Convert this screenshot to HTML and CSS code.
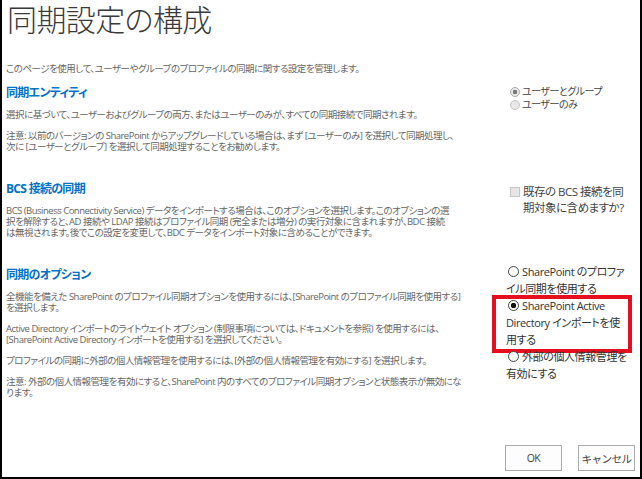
FILE: index.html
```html
<!DOCTYPE html>
<html>

<head>
    <meta charset="utf-8">
    <title>同期設定の構成</title>
    <link rel="stylesheet" href="styles.css">
</head>

<body>
    <div class="frame">
        <h1 class="title">同期設定の構成</h1>
        <p class="intro">このページを使用して、ユーザーやグループのプロファイルの同期に関する設定を管理します。</p>

        <section class="setting">
            <div class="desc">
                <h2>同期エンティティ</h2>
                <p>選択に基づいて、ユーザーおよびグループの両方、またはユーザーのみが、すべての同期接続で同期されます。</p>
                <p>注意: 以前のバージョンの SharePoint からアップグレードしている場合は、まず [ユーザーのみ] を選択して同期処理し、<br>次に [ユーザーとグループ] を選択して同期処理することをお勧めします。</p>
            </div>
            <div class="control control-entity">
                <label class="choice"><input type="radio" name="entity" checked disabled>ユーザーとグループ</label>
                <label class="choice"><input type="radio" name="entity" disabled>ユーザーのみ</label>
            </div>
        </section>

        <section class="setting">
            <div class="desc">
                <h2>BCS 接続の同期</h2>
                <p>BCS (Business Connectivity Service) データをインポートする場合は、このオプションを選択します。このオプションの選<br>択を解除すると、AD 接続や LDAP 接続はプロファイル同期 (完全または増分) の実行対象に含まれますが、BDC 接続<br>は無視されます。後でこの設定を変更して、BDC データをインポート対象に含めることができます。</p>
            </div>
            <div class="control control-bcs">
                <label class="check"><input type="checkbox" disabled><span>既存の BCS 接続を同<br>期対象に含めますか?</span></label>
            </div>
        </section>

        <section class="setting">
            <div class="desc">
                <h2>同期のオプション</h2>
                <p>全機能を備えた SharePoint のプロファイル同期オプションを使用するには、[SharePoint のプロファイル同期を使用する]<br>を選択します。</p>
                <p>Active Directory インポートのライトウェイト オプション (制限事項については、ドキュメントを参照) を使用するには、<br>[SharePoint Active Directory インポートを使用する] を選択してください。</p>
                <p>プロファイルの同期に外部の個人情報管理を使用するには、[外部の個人情報管理を有効にする] を選択します。</p>
                <p>注意: 外部の個人情報管理を有効にすると、SharePoint 内のすべてのプロファイル同期オプションと状態表示が無効にな<br>ります。</p>
            </div>
            <div class="control control-options">
                <label class="option"><input type="radio" name="mode">SharePoint のプロファ<br>イル同期を使用する</label>
                <label class="option"><input type="radio" name="mode" checked>SharePoint Active<br>Directory インポートを使<br>用する<span class="callout"></span></label>
                <label class="option"><input type="radio" name="mode">外部の個人情報管理を<br>有効にする</label>
            </div>
        </section>

        <div class="buttons">
            <button>OK</button>
            <button>キャンセル</button>
        </div>
    </div>
</body>

</html>
```

FILE: styles.css
```css
* {
    box-sizing: border-box;
    padding: 0;
    margin: 0;
}

body {
    width: 642px;
    height: 479px;
    overflow: hidden;
    background: #fff;
    font-family: "Open Sans", "Noto Sans CJK JP", sans-serif;
    font-feature-settings: "palt";
    color: #444;
}

.frame {
    display: flex;
    flex-direction: column;
    height: 479px;
    border: 2px solid #000;
    border-top: 0;
    padding: 1px 0 6px 4px;
}

.title {
    font-size: 30px;
    font-weight: 300;
    line-height: 38px;
    letter-spacing: -0.6px;
    color: #3a3a3a;
    margin-left: 1px;
}

.intro,
.desc p {
    font-size: 9.5px;
    line-height: 11px;
    letter-spacing: -0.5px;
    color: #666;
    white-space: nowrap;
}

.intro {
    margin-top: 24px;
    line-height: 12px;
}

.setting {
    display: grid;
    grid-template-columns: 486px 130px;
    column-gap: 14px;
    align-items: start;
    margin-top: 10px;
}

.setting + .setting {
    margin-top: 29px;
}

.desc h2 {
    font-size: 12px;
    font-weight: bold;
    line-height: 16px;
    letter-spacing: -0.7px;
    color: #0072c6;
    margin-bottom: 8px;
}

.desc p + p {
    margin-top: 10px;
}

/* right hand column */
.control {
    color: #444;
    white-space: nowrap;
}

.control-bcs {
    margin-top: 3px;
}

.control-options {
    margin-top: -4px;
}

.choice {
    display: flex;
    align-items: center;
    font-size: 10px;
    line-height: 13px;
    letter-spacing: -0.5px;
}

.choice input {
    appearance: none;
    width: 10px;
    height: 10px;
    margin: 0 2px 0 4px;
    border: 1px solid #c6c6c6;
    border-radius: 50%;
    background: #e8e8e8;
}

.choice input:checked {
    background: radial-gradient(circle, #777 0 2px, #e8e8e8 2.5px);
    border-color: #aaa;
}

.check {
    display: flex;
    align-items: flex-start;
    font-size: 11.5px;
    line-height: 16px;
    letter-spacing: -0.5px;
}

.check input {
    appearance: none;
    flex: none;
    width: 10px;
    height: 10px;
    margin: 3px 3px 0 4px;
    border: 1px solid #c8c8c8;
    background: #e6e6e6;
}

.option {
    position: relative;
    display: block;
    font-size: 11px;
    line-height: 17px;
    letter-spacing: -0.4px;
    color: #333;
}

.option input {
    appearance: none;
    width: 11px;
    height: 11px;
    margin: 0 3px 0 2px;
    border: 1px solid #444;
    border-radius: 50%;
    background: #fff;
    vertical-align: -1px;
}

.option input:checked {
    background: radial-gradient(circle, #111 0 2.5px, #fff 3px);
}

.callout {
    position: absolute;
    left: -14px;
    top: -2px;
    width: 140px;
    height: 58px;
    border: 4px solid #e50f1f;
}

.buttons {
    display: flex;
    justify-content: flex-end;
    gap: 16px;
    margin-top: auto;
    padding-right: 5px;
}

.buttons button {
    width: 57px;
    height: 26px;
    font-family: inherit;
    font-size: 10.5px;
    letter-spacing: -0.5px;
    color: #444;
    background: #fdfdfd;
    border: 1px solid #ababab;
}
```
